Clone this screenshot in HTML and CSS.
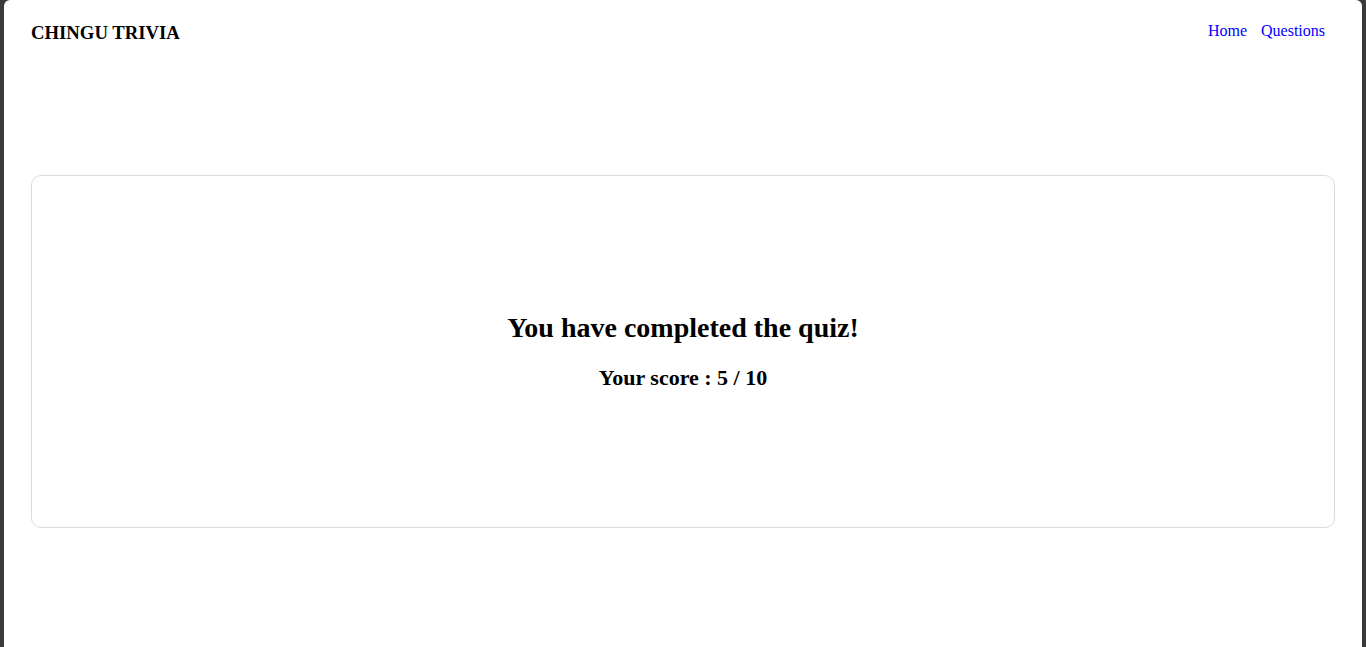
FILE: index.html
```html
<!DOCTYPE html>
<html lang="en">
<head>
<meta charset="utf-8">
<title>Chingu Trivia</title>
<link rel="stylesheet" href="styles.css">
</head>
<body>
<div class="frame">
  <header class="header">
    <h3 class="brand">CHINGU TRIVIA</h3>
    <nav class="nav">
      <a href="#" class="nav-link">Home</a>
      <a href="#" class="nav-link">Questions</a>
    </nav>
  </header>
  <main class="card">
    <h2 class="card-title">You have completed the quiz!</h2>
    <h3 class="card-score">Your score : 5 / 10</h3>
  </main>
</div>
</body>
</html>
```
FILE: styles.css
```css
html, body {
  margin: 0;
  padding: 0;
  height: 100%;
}
body {
  background: #3a3a3a;
  font-family: "Liberation Serif", "Times New Roman", serif;
  color: #000;
  overflow: hidden;
}
.frame {
  background: #fff;
  margin: 0 4px;
  height: 100%;
  border-radius: 6px 6px 0 0;
  padding: 0 27px;
  box-sizing: border-box;
}
.header {
  display: flex;
  justify-content: space-between;
  align-items: flex-start;
  padding-top: 22px;
}
.brand {
  margin: 0;
  font-size: 18.72px;
  font-weight: bold;
}
.nav {
  display: flex;
  gap: 14px;
  padding-right: 10px;
  font-size: 16px;
}
.nav-link {
  text-decoration: none;
  color: blue;
}
.card {
  margin-top: 131px;
  height: 353px;
  box-sizing: border-box;
  border: 1px solid #dedad6;
  border-radius: 10px;
  display: flex;
  flex-direction: column;
  justify-content: center;
  align-items: center;
}
.card-title {
  font-size: 28px;
  margin: 0 0 21px;
}
.card-score {
  font-size: 22px;
  margin: 0;
}
```
